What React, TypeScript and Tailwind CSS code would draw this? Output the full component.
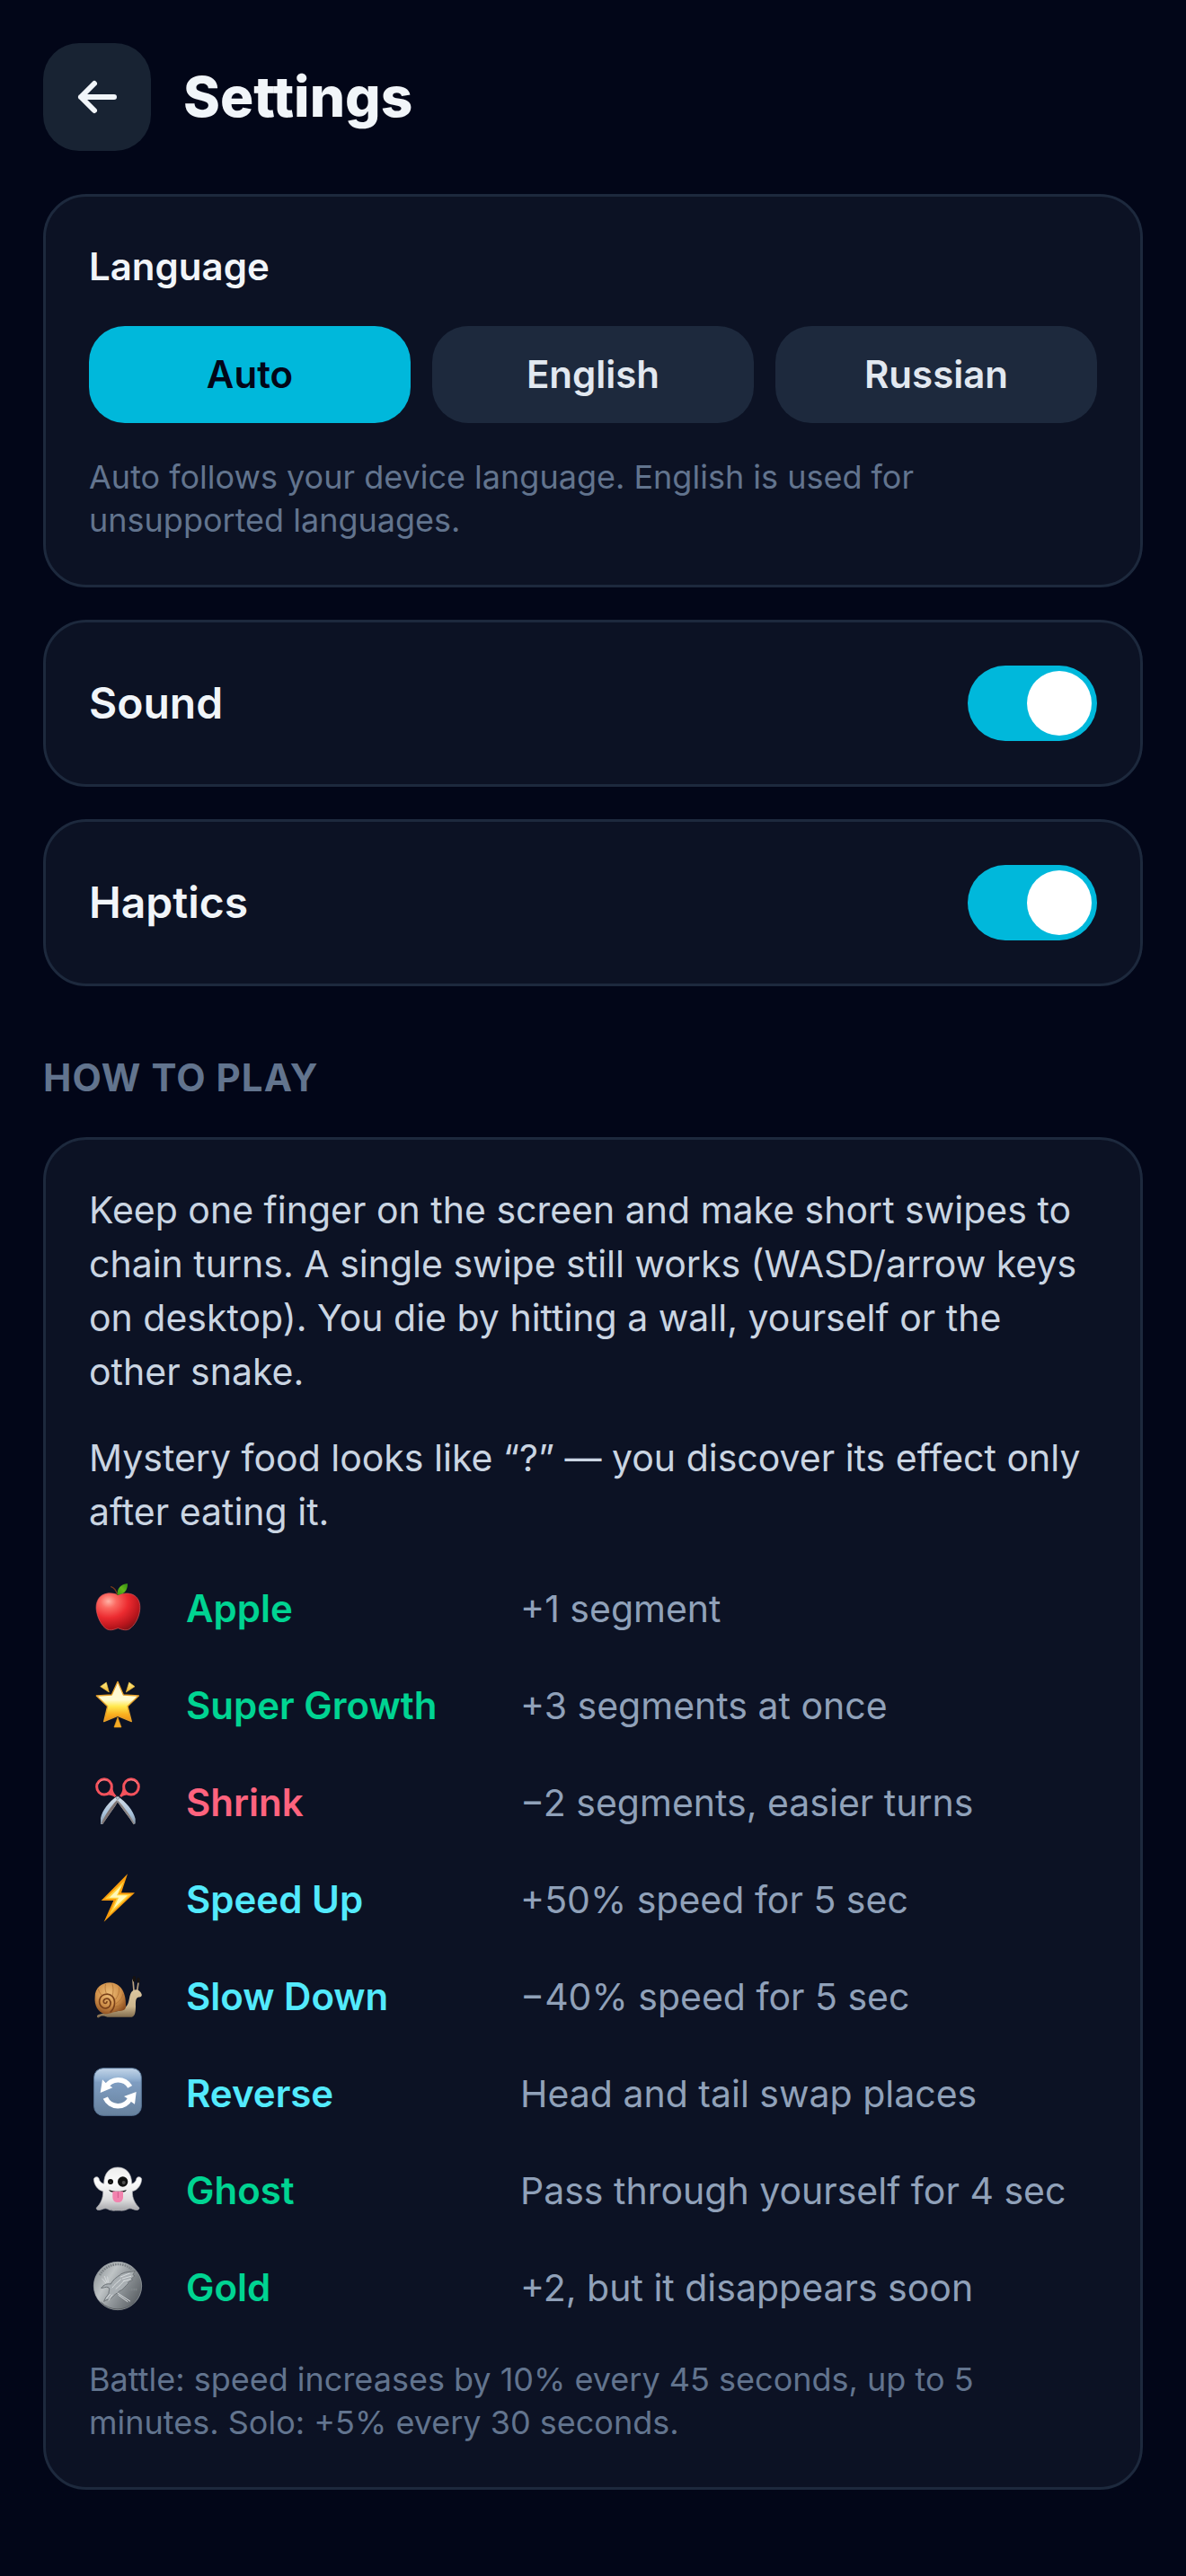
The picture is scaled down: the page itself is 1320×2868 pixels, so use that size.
import React, { useState } from 'react';

const AppleIcon: React.FC = () => (
  <svg viewBox="0 0 192 192" className="size-16" aria-hidden="true">
    <defs>
      <radialGradient id="apple-skin" cx="0.28" cy="0.22" r="0.9">
        <stop offset="0" stopColor="#ffb3a6" />
        <stop offset="0.2" stopColor="#fb6a62" />
        <stop offset="0.5" stopColor="#ec2b30" />
        <stop offset="0.8" stopColor="#b8151c" />
        <stop offset="1" stopColor="#7d1216" />
      </radialGradient>
      <linearGradient id="apple-leaf" x1="1" y1="0" x2="0" y2="1">
        <stop offset="0" stopColor="#2f8a12" />
        <stop offset="0.5" stopColor="#63b71b" />
        <stop offset="1" stopColor="#3c9510" />
      </linearGradient>
    </defs>
    <path
      d="M97 51C85 44 62 41 44 51C27 61 22 84 25 102C29 130 44 155 59 164C70 170 82 167 97 161C112 167 125 170 135 164C152 153 167 128 170 100C172 80 167 61 150 51C134 42 112 44 97 51Z"
      fill="url(#apple-skin)"
      stroke="#d8575a"
      strokeWidth="2"
    />
    <path d="M95 49C91 36 84 26 74 23" fill="none" stroke="#7a3a1c" strokeWidth="4" strokeLinecap="round" />
    <path d="M95 50C93 29 106 14 129 12C130 34 117 49 95 50Z" fill="url(#apple-leaf)" />
  </svg>
);

const StarIcon: React.FC = () => (
  <svg viewBox="0 0 192 192" className="size-16" aria-hidden="true">
    <defs>
      <linearGradient id="star-face" x1="0" y1="0" x2="0" y2="1">
        <stop offset="0" stopColor="#fff6cf" />
        <stop offset="0.45" stopColor="#fffbd2" />
        <stop offset="0.62" stopColor="#ffe84e" />
        <stop offset="0.82" stopColor="#f9b01f" />
        <stop offset="1" stopColor="#ee8e17" />
      </linearGradient>
      <linearGradient id="star-ray" x1="0" y1="0" x2="0" y2="1">
        <stop offset="0" stopColor="#fff08a" />
        <stop offset="1" stopColor="#f0b22c" />
      </linearGradient>
    </defs>
    <path
      d="M96 16L115 60L166 63L129 98L142 149L96 130L50 149L62 98L25 63L76 60Z"
      fill="url(#star-face)"
      stroke="#e5a02a"
      strokeWidth="4"
      strokeLinejoin="round"
    />
    <path d="M38 32L58 18L67 51Z" fill="url(#star-ray)" stroke="#e9b83c" strokeWidth="2" strokeLinejoin="round" />
    <path d="M153 32L134 18L124 51Z" fill="url(#star-ray)" stroke="#e9b83c" strokeWidth="2" strokeLinejoin="round" />
    <path d="M96 135L84 168H108Z" fill="#f5ac25" stroke="#e79a1c" strokeWidth="2" strokeLinejoin="round" />
  </svg>
);

const ScissorsIcon: React.FC = () => (
  <svg viewBox="0 0 192 192" className="size-16" aria-hidden="true">
    <defs>
      <linearGradient id="blade" x1="0" y1="0" x2="0" y2="1">
        <stop offset="0" stopColor="#d5dde6" />
        <stop offset="0.6" stopColor="#a9c3dc" />
        <stop offset="1" stopColor="#8796a6" />
      </linearGradient>
    </defs>
    <path d="M92 76C68 92 44 122 39 148V168H46C62 142 84 116 99 88Z" fill="url(#blade)" />
    <path d="M46 168C62 142 84 116 99 88L93 88C74 108 54 136 42 165Z" fill="#7f7473" />
    <path d="M98 76C123 94 148 122 155 150V166L149 169C134 144 111 116 91 88Z" fill="url(#blade)" />
    <path d="M149 169C134 144 111 116 91 88L97 89C116 108 138 138 152 166Z" fill="#8d8583" />
    <ellipse cx="51" cy="43" rx="25" ry="26" fill="none" stroke="#f4525c" strokeWidth="9" />
    <ellipse cx="141" cy="43" rx="25" ry="26" fill="none" stroke="#f4525c" strokeWidth="9" />
    <path d="M77 36C80 52 80 62 92 73L86 78C78 70 62 70 50 71C66 66 76 56 77 36Z" fill="#f4525c" />
    <path d="M115 36C112 52 112 62 102 73L108 78C114 70 130 70 142 71C126 66 116 56 115 36Z" fill="#f4525c" />
    <path d="M31 32C36 22 48 18 58 21M131 22C142 17 156 22 161 32" fill="none" stroke="#ff8e91" strokeWidth="3" strokeLinecap="round" />
    <circle cx="96" cy="80" r="5" fill="#c3ccd4" stroke="#6d7680" strokeWidth="2" />
  </svg>
);

const BoltIcon: React.FC = () => (
  <svg viewBox="0 0 192 192" className="size-16" aria-hidden="true">
    <path d="M129 10L108 73H153L50 170L82 99H41Z" fill="#f99b0c" />
    <path d="M118 33L98 78H141L68 146L92 93H54Z" fill="#ffd23a" />
    <path d="M109 48L93 82H129L82 126L99 89H68Z" fill="#fff8b8" />
  </svg>
);

const SnailIcon: React.FC = () => (
  <svg viewBox="0 0 192 192" className="size-16" aria-hidden="true">
    <defs>
      <radialGradient id="snail-shell" cx="0.45" cy="0.35" r="0.7">
        <stop offset="0" stopColor="#edbd78" />
        <stop offset="0.55" stopColor="#d1924c" />
        <stop offset="1" stopColor="#87491c" />
      </radialGradient>
      <linearGradient id="snail-body" x1="0" y1="0" x2="0" y2="1">
        <stop offset="0" stopColor="#dcc7a0" />
        <stop offset="0.6" stopColor="#cdb68d" />
        <stop offset="1" stopColor="#7d684a" />
      </linearGradient>
    </defs>
    <path d="M150 76L147 40M161 76L166 42" stroke="#b9a181" strokeWidth="5" strokeLinecap="round" />
    <ellipse cx="151" cy="37" rx="5" ry="10" fill="#17120f" />
    <ellipse cx="165" cy="41" rx="5" ry="9" fill="#17120f" />
    <path
      d="M27 160C34 152 55 152 72 148C105 144 122 138 130 120C137 104 134 84 148 75C160 69 172 76 176 88C178 97 171 98 164 98C155 102 156 114 156 128C156 150 153 161 143 164H62C48 159 40 159 33 166C28 167 26 164 27 160Z"
      fill="url(#snail-body)"
    />
    <path
      d="M20 96C20 68 42 49 70 49C104 50 124 80 123 124C124 138 118 142 108 143C88 143 70 155 52 154C30 148 17 124 20 96Z"
      fill="url(#snail-shell)"
    />
    <path
      d="M72 147C88 132 90 108 78 95C64 81 39 87 35 108C33 127 47 138 60 134C73 130 76 115 68 106C60 99 47 104 49 114C51 120 59 120 60 113"
      fill="none"
      stroke="#79401a"
      strokeWidth="5"
      strokeLinecap="round"
    />
    <path
      d="M78 94C82 80 82 66 78 54M87 107C98 94 102 80 100 64M90 119C104 111 112 98 114 86M88 130C102 128 114 120 121 110M58 86C54 74 53 65 56 54M43 91C36 84 32 76 31 70"
      fill="none"
      stroke="#a8692f"
      strokeWidth="2"
    />
  </svg>
);

const ReverseIcon: React.FC = () => (
  <svg viewBox="0 0 192 192" className="size-16" aria-hidden="true">
    <defs>
      <linearGradient id="reverse-tile" x1="0" y1="0" x2="0" y2="1">
        <stop offset="0" stopColor="#c3d5e8" />
        <stop offset="0.22" stopColor="#94b2d2" />
        <stop offset="0.3" stopColor="#7f9dc1" />
        <stop offset="1" stopColor="#67819d" />
      </linearGradient>
    </defs>
    <rect x="17" y="11" width="158" height="158" rx="30" fill="url(#reverse-tile)" stroke="#587596" strokeWidth="3" />
    <g fill="none" stroke="#fff" strokeWidth="17">
      <path d="M137 73A46 46 0 0 0 57 74" />
      <path d="M55 110A46 46 0 0 0 138 112" />
    </g>
    <path d="M45 49L38 93L79 76L70 70L56 60Z" fill="#fff" />
    <path d="M158 90L117 105L127 111L142 124L153 131Z" fill="#fff" />
  </svg>
);

const GhostIcon: React.FC = () => (
  <svg viewBox="0 0 192 192" className="size-16" aria-hidden="true">
    <defs>
      <linearGradient id="ghost-sheet" x1="0" y1="0" x2="0" y2="1">
        <stop offset="0" stopColor="#ececec" />
        <stop offset="0.35" stopColor="#fbfbfb" />
        <stop offset="0.75" stopColor="#dcdcdd" />
        <stop offset="1" stopColor="#a4a4a8" />
      </linearGradient>
    </defs>
    <path
      d="M96 18C124 18 143 38 143 73C152 72 157 64 159 55C162 47 176 49 176 58C175 76 163 95 145 98C144 122 155 140 167 152C171 160 158 163 148 158C140 155 134 154 126 159C114 164 108 162 96 162C84 162 78 164 66 159C58 154 52 155 44 158C34 163 21 160 26 152C38 140 48 122 47 98C29 95 17 76 16 58C17 49 30 47 33 55C35 64 41 72 50 73C50 38 68 18 96 18Z"
      fill="url(#ghost-sheet)"
      stroke="#b7b7bb"
      strokeWidth="2"
    />
    <path d="M66 93C84 100 108 100 126 93L121 99C106 104 85 104 71 99Z" fill="#171717" />
    <path d="M79 98H114V116C114 128 107 135 97 135C86 135 79 128 79 116Z" fill="#f283ae" />
    <path d="M97 101V119" stroke="#d2588c" strokeWidth="3" strokeLinecap="round" />
    <circle cx="72" cy="66" r="9" fill="#0c0c0c" />
    <circle cx="113" cy="66" r="17" fill="#111" />
    <circle cx="116" cy="69" r="6" fill="#4e4e4e" />
    <circle cx="72" cy="67" r="2" fill="#5f5f5f" />
  </svg>
);

const CoinIcon: React.FC = () => (
  <svg viewBox="0 0 192 192" className="size-16" aria-hidden="true">
    <defs>
      <linearGradient id="coin-face" x1="0" y1="0.2" x2="1" y2="0.8">
        <stop offset="0" stopColor="#8d9397" />
        <stop offset="0.3" stopColor="#bfc4c6" />
        <stop offset="0.55" stopColor="#92989c" />
        <stop offset="1" stopColor="#565b60" />
      </linearGradient>
    </defs>
    <circle cx="96" cy="90" r="80" fill="url(#coin-face)" stroke="#a4aaad" strokeWidth="2" />
    <path d="M36 54A70 70 0 0 1 142 34" fill="none" stroke="#7d8387" strokeWidth="8" strokeDasharray="5 3" />
    <path
      d="M41 97C50 85 61 82 73 84C82 66 96 60 108 50C124 41 140 45 154 40C148 50 143 54 153 56C145 65 137 64 146 70C134 76 129 76 131 82C120 91 116 103 101 108C93 116 84 119 78 128C70 137 58 135 50 142C53 130 60 126 66 115C66 105 71 101 65 95C57 91 49 98 41 97Z"
      fill="#a9afb3"
      stroke="#6c7276"
      strokeWidth="3"
      strokeLinejoin="round"
    />
    <path
      d="M78 96C86 84 96 78 106 68M90 100C102 90 110 82 118 72M106 60L136 48M112 66L140 58M116 74L138 68M70 118L58 132M78 120L66 138M96 114L137 141M99 121L129 143"
      fill="none"
      stroke="#d9dddf"
      strokeWidth="3"
      strokeLinecap="round"
    />
    <path d="M44 66L56 80M52 58L60 78M62 60L64 78" stroke="#d3d7d9" strokeWidth="3" strokeLinecap="round" />
    <path d="M134 102H160" stroke="#7f8589" strokeWidth="8" strokeDasharray="5 2" />
    <path d="M40 144A78 78 0 0 0 152 144" fill="none" stroke="#5b6064" strokeWidth="3" />
  </svg>
);

const languages = ['Auto', 'English', 'Russian'];

const effects = [
  { name: 'Apple', color: 'text-emerald-400', effect: '+1 segment', icon: <AppleIcon /> },
  { name: 'Super Growth', color: 'text-emerald-400', effect: '+3 segments at once', icon: <StarIcon /> },
  { name: 'Shrink', color: 'text-rose-400', effect: '−2 segments, easier turns', icon: <ScissorsIcon /> },
  { name: 'Speed Up', color: 'text-cyan-300', effect: '+50% speed for 5 sec', icon: <BoltIcon /> },
  { name: 'Slow Down', color: 'text-cyan-300', effect: '−40% speed for 5 sec', icon: <SnailIcon /> },
  { name: 'Reverse', color: 'text-cyan-300', effect: 'Head and tail swap places', icon: <ReverseIcon /> },
  { name: 'Ghost', color: 'text-emerald-400', effect: 'Pass through yourself for 4 sec', icon: <GhostIcon /> },
  { name: 'Gold', color: 'text-emerald-400', effect: '+2, but it disappears soon', icon: <CoinIcon /> },
];

const Card: React.FC<{ children: React.ReactNode }> = ({ children }) => (
  <section className="rounded-[48px] border-3 border-slate-800 bg-[#0c1224] p-12">{children}</section>
);

const Toggle: React.FC<{ id: string; label: string }> = ({ id, label }) => {
  const [on, setOn] = useState(true);

  return (
    <Card>
      <div className="flex items-center justify-between">
        <label htmlFor={id} className="text-[48px] leading-[72px] font-semibold">
          {label}
        </label>
        <input
          id={id}
          type="checkbox"
          role="switch"
          checked={on}
          onChange={() => setOn(!on)}
          className="flex h-[84px] w-36 shrink-0 cursor-pointer appearance-none items-center rounded-full bg-slate-700 p-1.5 before:size-[72px] before:rounded-full before:bg-white checked:justify-end checked:bg-cyan-500"
        />
      </div>
    </Card>
  );
};

export default function App() {
  const [language, setLanguage] = useState('Auto');

  return (
    <main className="min-h-screen bg-slate-950 px-12 pt-12 pb-24 font-['Inter',sans-serif] text-slate-100">
      <header className="mb-12 flex items-center gap-9">
        <button
          type="button"
          aria-label="Back"
          className="flex size-[120px] items-center justify-center rounded-[40px] bg-[#182333]"
        >
          <svg viewBox="0 0 48 48" className="size-12" fill="none" stroke="currentColor" strokeWidth="6" strokeLinecap="round" strokeLinejoin="round" aria-hidden="true">
            <path d="M43 24H6M21 9L6 24L21 39" />
          </svg>
        </button>
        <h1 className="text-[62px] leading-[72px] font-extrabold">Settings</h1>
      </header>

      <div className="flex flex-col gap-9">
        <Card>
          <h2 className="mb-9 text-[42px] leading-[60px] font-semibold">Language</h2>
          <div className="grid grid-cols-3 gap-6">
            {languages.map((name) => (
              <button
                key={name}
                type="button"
                aria-pressed={language === name}
                onClick={() => setLanguage(name)}
                className="h-[108px] rounded-[40px] bg-slate-800 text-[42px] leading-[60px] font-semibold text-slate-200 aria-pressed:bg-cyan-500 aria-pressed:text-slate-950"
              >
                {name}
              </button>
            ))}
          </div>
          <p className="mt-9 text-[36px] leading-[48px] text-slate-500">
            Auto follows your device language. English is used for unsupported languages.
          </p>
        </Card>

        <Toggle id="sound" label="Sound" />
        <Toggle id="haptics" label="Haptics" />

        <h2 className="mt-9 text-[42px] leading-[60px] font-bold tracking-wide text-slate-500 uppercase">How to play</h2>

        <Card>
          <div className="flex flex-col gap-9 text-[41px] leading-[60px] text-slate-300">
            <p>
              Keep one finger on the screen and make short swipes to chain turns. A single swipe still works
              (WASD/arrow keys on desktop). You die by hitting a wall, yourself or the other snake.
            </p>
            <p>Mystery food looks like “?” — you discover its effect only after eating it.</p>
            <ul className="flex flex-col gap-6">
              {effects.map((item) => (
                <li key={item.name} className="grid h-[84px] grid-cols-[72px_336px_1fr] items-center gap-9">
                  {item.icon}
                  <span className={`text-[42px] font-semibold ${item.color}`}>{item.name}</span>
                  <span className="text-slate-400">{item.effect}</span>
                </li>
              ))}
            </ul>
            <p className="text-[36px] leading-[48px] text-slate-500">
              Battle: speed increases by 10% every 45 seconds, up to 5 minutes. Solo: +5% every 30 seconds.
            </p>
          </div>
        </Card>
      </div>
    </main>
  );
}
